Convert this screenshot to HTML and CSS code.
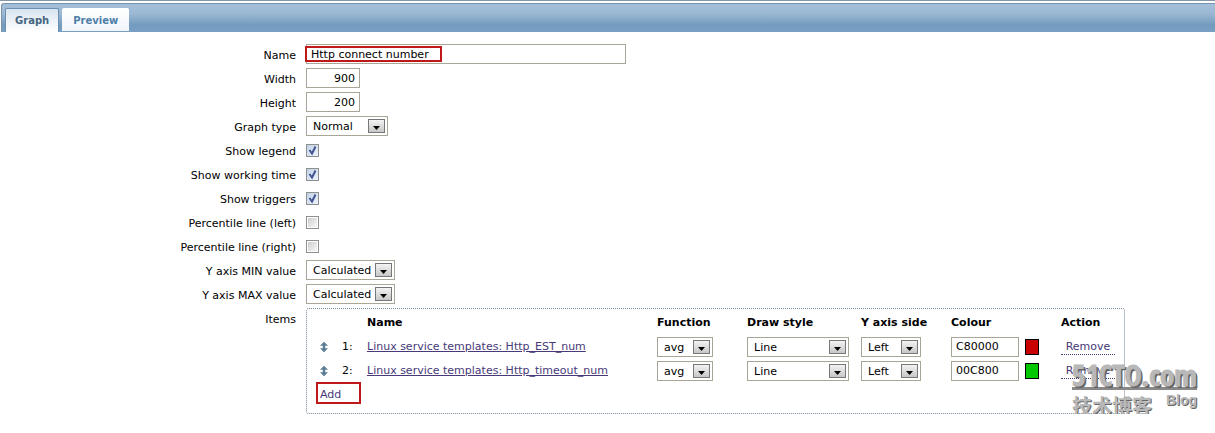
FILE: index.html
```html
<!DOCTYPE html>
<html lang="en">
<head>
    <meta charset="UTF-8">
    <title>Graph</title>
    <link rel="stylesheet" href="styles.css">
</head>
<body>
<div class="tabs">
    <a class="tab selected" href="#graph">Graph</a>
    <a class="tab" href="#preview">Preview</a>
</div>
<form class="form" id="graph">
    <div class="row">
        <label for="name">Name</label>
        <div class="field marked">
            <input class="text wide" id="name" type="text" value="Http connect number">
            <span class="mark mark-name"></span>
        </div>
    </div>
    <div class="row">
        <label for="width">Width</label>
        <div class="field"><input class="text number" id="width" type="text" value="900"></div>
    </div>
    <div class="row">
        <label for="height">Height</label>
        <div class="field"><input class="text number" id="height" type="text" value="200"></div>
    </div>
    <div class="row">
        <label for="graphtype">Graph type</label>
        <div class="field"><select class="select type" id="graphtype"><option>Normal</option></select></div>
    </div>
    <div class="row">
        <label for="legend">Show legend</label>
        <div class="field"><input class="check" id="legend" type="checkbox" checked></div>
    </div>
    <div class="row">
        <label for="worktime">Show working time</label>
        <div class="field"><input class="check" id="worktime" type="checkbox" checked></div>
    </div>
    <div class="row">
        <label for="triggers">Show triggers</label>
        <div class="field"><input class="check" id="triggers" type="checkbox" checked></div>
    </div>
    <div class="row">
        <label for="percent_left">Percentile line (left)</label>
        <div class="field"><input class="check" id="percent_left" type="checkbox"></div>
    </div>
    <div class="row">
        <label for="percent_right">Percentile line (right)</label>
        <div class="field"><input class="check" id="percent_right" type="checkbox"></div>
    </div>
    <div class="row">
        <label for="ymin">Y axis MIN value</label>
        <div class="field"><select class="select axis" id="ymin"><option>Calculated</option></select></div>
    </div>
    <div class="row">
        <label for="ymax">Y axis MAX value</label>
        <div class="field"><select class="select axis" id="ymax"><option>Calculated</option></select></div>
    </div>
    <div class="row row-items">
        <span class="label" id="items_label">Items</span>
        <div class="items">
            <table aria-labelledby="items_label">
                <thead>
                <tr>
                    <th class="col-move"></th>
                    <th class="col-num"></th>
                    <th class="col-name">Name</th>
                    <th class="col-func">Function</th>
                    <th class="col-draw">Draw style</th>
                    <th class="col-side">Y axis side</th>
                    <th class="col-colour">Colour</th>
                    <th class="col-action">Action</th>
                </tr>
                </thead>
                <tbody>
                <tr>
                    <td class="col-move"><svg class="move" viewBox="0 0 8 10"><path d="M4 0L7.5 3.5H5V6.5H7.5L4 10L.5 6.5H3V3.5H.5Z"/></svg></td>
                    <td>1:</td>
                    <td><a class="link" href="#item1">Linux service templates: Http_EST_num</a></td>
                    <td><select class="select func" aria-label="Function"><option>avg</option></select></td>
                    <td><select class="select draw" aria-label="Draw style"><option>Line</option></select></td>
                    <td><select class="select side" aria-label="Y axis side"><option>Left</option></select></td>
                    <td>
                        <div class="colour">
                            <input class="text hex" type="text" value="C80000" aria-label="Colour">
                            <span class="swatch red"></span>
                        </div>
                    </td>
                    <td><button class="remove" type="button">Remove</button></td>
                </tr>
                <tr>
                    <td class="col-move"><svg class="move" viewBox="0 0 8 10"><path d="M4 0L7.5 3.5H5V6.5H7.5L4 10L.5 6.5H3V3.5H.5Z"/></svg></td>
                    <td>2:</td>
                    <td><a class="link" href="#item2">Linux service templates: Http_timeout_num</a></td>
                    <td><select class="select func" aria-label="Function"><option>avg</option></select></td>
                    <td><select class="select draw" aria-label="Draw style"><option>Line</option></select></td>
                    <td><select class="select side" aria-label="Y axis side"><option>Left</option></select></td>
                    <td>
                        <div class="colour">
                            <input class="text hex" type="text" value="00C800" aria-label="Colour">
                            <span class="swatch green"></span>
                        </div>
                    </td>
                    <td><button class="remove" type="button">Remove</button></td>
                </tr>
                </tbody>
            </table>
            <div class="add-row marked">
                <button class="add" type="button">Add</button>
                <span class="mark mark-add"></span>
            </div>
        </div>
    </div>
</form>
<div class="watermark">
    <div class="site">51CTO.com</div>
    <div class="sub"><span class="cn" lang="zh">技术博客</span><span class="blog">Blog</span></div>
</div>
</body>
</html>
```
FILE: styles.css
```css
*{
    box-sizing: border-box;
}
body{
    margin: 0;
    position: relative;
    border-top: 1px solid #8796a5;
    background-color: #fff;
    color: #000;
    font-family: "DejaVu Sans", Verdana, sans-serif;
    font-size: 11px;
}
input, select, button{
    font: inherit;
    color: inherit;
}
/* tabs */
.tabs{
    display: flex;
    gap: 3px;
    height: 29px;
    margin: 2px 0 0 1px;
    padding: 4px 3px 0;
    border-top: 1px solid #7893ae;
    border-left: 1px solid #7893ae;
    border-radius: 3px 0 0 0;
    background: linear-gradient(#a6bfd9, #9bb8d3 35%, #739bbf 75%, #7aa0c3);
}
.tab{
    height: 23px;
    padding: 0 11px;
    line-height: 25px;
    border-radius: 2px 2px 0 0;
    background: linear-gradient(#fff, #f0f5fa);
    color: #4f7fa8;
    font-size: 10px;
    font-weight: bold;
    text-decoration: none;
}
.tab.selected{
    height: 24px;
    padding: 0 9px;
    border: 1px solid #6d90b1;
    border-bottom: 0;
    background: linear-gradient(#d8e4f0, #fff);
    color: #46657f;
    line-height: 23px;
}
/* form */
.form{
    padding-top: 10px;
}
.row{
    display: grid;
    grid-template-columns: 296px 1fr;
    grid-template-rows: 24px;
    column-gap: 10px;
}
.row label, .label{
    text-align: right;
    line-height: 28px;
}
.row-items{
    grid-template-rows: auto;
    padding-top: 2px;
}
.row .label{
    line-height: 24px;
}
.field{
    display: flex;
    align-items: center;
}
.text{
    height: 20px;
    padding: 0 4px;
    border: 1px solid #a9a698;
    background-color: #fff;
}
.wide{
    width: 320px;
}
.number{
    width: 54px;
    text-align: right;
}
.hex{
    width: 68px;
}
.select{
    display: block;
    height: 20px;
    padding: 0 6px;
    border: 1px solid #a9a698;
    border-radius: 0;
    appearance: none;
    line-height: normal;
    background: #fff url("data:image/svg+xml,%3Csvg xmlns='http://www.w3.org/2000/svg' width='17' height='14'%3E%3Cdefs%3E%3ClinearGradient id='g' x2='0' y2='1'%3E%3Cstop stop-color='%23f5f5f5'/%3E%3Cstop offset='1' stop-color='%23c6c6c6'/%3E%3C/linearGradient%3E%3C/defs%3E%3Crect x='.5' y='.5' width='16' height='13' fill='url(%23g)' stroke='%23777'/%3E%3Cpath d='M5 7h7l-3.5 4z'/%3E%3C/svg%3E") no-repeat right 2px center;
}
.type{
    width: 82px;
}
.axis{
    width: 89px;
}
.func{
    width: 56px;
}
.draw{
    width: 102px;
}
.side{
    width: 60px;
}
.check{
    width: 13px;
    height: 13px;
    margin: 0;
    border: 1px solid #8e8f8f;
    appearance: none;
    background: linear-gradient(135deg, #cfcfcf, #f6f6f6) content-box;
    padding: 1px;
}
.check:checked{
    background: url("data:image/svg+xml,%3Csvg xmlns='http://www.w3.org/2000/svg' width='11' height='11'%3E%3Cpath d='M2.5 5l2.5 3.5L8.5 1.5' fill='none' stroke='%233f5690' stroke-width='2'/%3E%3C/svg%3E") center no-repeat, linear-gradient(135deg, #c3d2e9, #eef3fb);
}
/* items */
.items{
    width: fit-content;
    padding: 2px 9px 6px 10px;
    border: 1px dotted #778899;
    border-radius: 3px;
}
.items table{
    table-layout: fixed;
    width: 798px;
    border-collapse: collapse;
}
.items th, .items td{
    height: 24px;
    padding: 0;
    text-align: left;
    line-height: 24px;
}
.col-move{
    width: 25px;
}
.items td.col-move{
    padding-left: 3px;
}
.col-num{
    width: 25px;
}
.col-name{
    width: 290px;
}
.col-func{
    width: 90px;
}
.col-draw{
    width: 114px;
}
.col-side{
    width: 90px;
}
.col-colour{
    width: 110px;
}
.move{
    display: block;
    width: 8px;
    height: 10px;
    fill: #5c7f97;
    stroke: #5c7f97;
    stroke-width: .5;
}
.link{
    color: #483a78;
}
.colour{
    display: flex;
    align-items: center;
    gap: 6px;
}
.swatch{
    width: 14px;
    height: 16px;
    border: 1px solid #000;
}
.red{
    background-color: #c80000;
}
.green{
    background-color: #00c800;
}
.remove, .add{
    display: block;
    padding: 0;
    border: 0;
    background: none;
    color: #483a78;
}
.remove{
    width: 54px;
    height: 16px;
    line-height: 15px;
    border-bottom: 1px dotted #483a78;
}
.add{
    height: 22px;
    padding: 0 3px;
}
.add-row{
    height: 24px;
}
/* red marks over the fields */
.marked{
    position: relative;
}
.mark{
    position: absolute;
    border: 2px solid #c01818;
    pointer-events: none;
}
.mark-name{
    top: 4px;
    left: -1px;
    width: 137px;
    height: 16px;
}
.mark-add{
    top: -1px;
    left: -1px;
    width: 45px;
    height: 22px;
}
/* watermark */
.watermark{
    position: absolute;
    top: 359px;
    right: 18px;
    width: 125px;
    color: #b8b8b8;
    font-weight: bold;
    text-shadow: 1px 1px 0 #666;
}
.site{
    height: 30px;
    border-bottom: 3px solid #888;
    font-family: "Open Sans Condensed", "Liberation Sans", sans-serif;
    font-size: 29px;
    line-height: 30px;
    white-space: nowrap;
    -webkit-text-stroke: 1px #b8b8b8;
    text-shadow: 2px 2px 0 #666;
}
.sub{
    display: flex;
    justify-content: space-between;
}
.cn{
    font-family: "Noto Sans CJK SC", sans-serif;
    font-size: 20px;
    line-height: 32px;
}
.blog{
    font-family: "Liberation Sans", sans-serif;
    font-size: 14px;
    line-height: 20px;
}
```
